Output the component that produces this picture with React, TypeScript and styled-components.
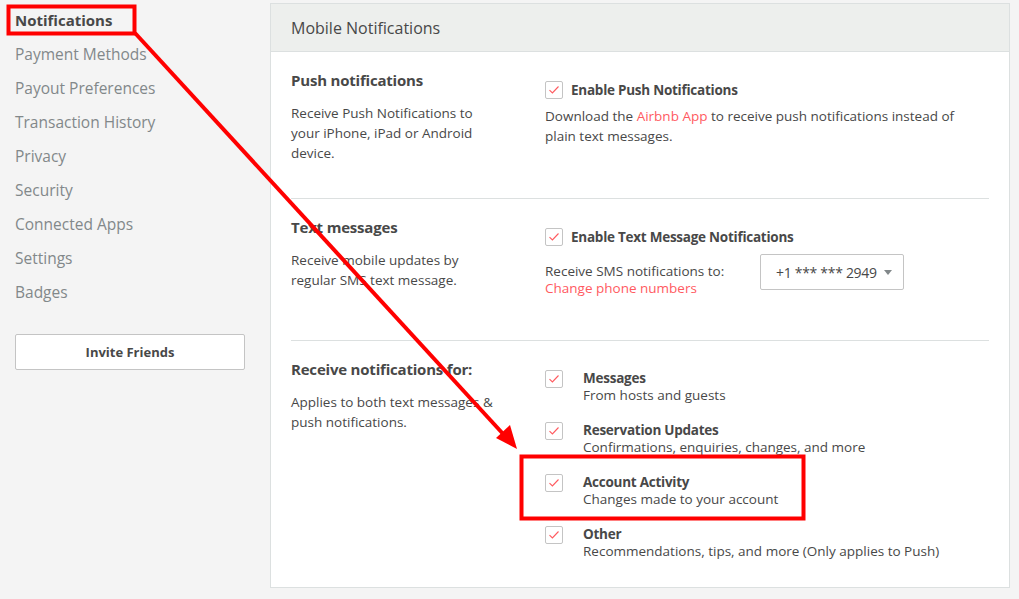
import React from 'react';
import styled, { createGlobalStyle } from 'styled-components';

const FONT = `"Open Sans", "Liberation Sans", sans-serif`;
const RED = '#ff5a5f';
const TEXT = '#484848';

const GlobalStyle = createGlobalStyle`
    html, body {
        margin: 0;
        padding: 0;
        background: #f4f4f4;
        font-family: ${FONT};
        color: ${TEXT};
    }
    * { box-sizing: border-box; }
`;

const Page = styled.div`
    position: relative;
    display: flex;
    align-items: flex-start;
    width: 1019px;
    height: 599px;
    padding-top: 3px;
    overflow: hidden;
`;

const Sidebar = styled.nav`
    width: 270px;
    padding-left: 15px;
    flex-shrink: 0;
`;

const NavItem = styled.div<{ $active?: boolean }>`
    height: 34px;
    line-height: 34px;
    font-size: ${({ $active }) => ($active ? '15px' : '15.5px')};
    font-weight: ${({ $active }) => ($active ? 700 : 400)};
    color: ${({ $active }) => ($active ? TEXT : '#82888a')};
`;

const InviteButton = styled.button`
    display: block;
    width: 230px;
    height: 36px;
    margin-top: 25px;
    background: #fff;
    border: 1px solid #c4c4c4;
    border-radius: 2px;
    font-family: ${FONT};
    font-size: 13px;
    font-weight: 700;
    color: ${TEXT};
`;

const Panel = styled.section`
    width: 740px;
    background: #fff;
    border: 1px solid #dce0e0;
`;

const PanelHeader = styled.header`
    height: 48px;
    padding: 0 20px;
    display: flex;
    align-items: center;
    background: #edefed;
    border-bottom: 1px solid #dce0e0;
    font-size: 16px;
`;

const Section = styled.div<{ $last?: boolean }>`
    display: grid;
    grid-template-columns: 254px 1fr;
    margin: 0 20px;
    padding: 17px 0 ${({ $last }) => ($last ? '27px' : '35px')};
    border-bottom: ${({ $last }) => ($last ? 'none' : '1px solid #dce0e0')};
`;

const Title = styled.h3`
    margin: 0;
    font-size: 15px;
    letter-spacing: -0.2px;
    line-height: 22px;
    font-weight: 700;
`;

const Desc = styled.p<{ $width: number }>`
    margin: 12px 0 0;
    width: ${({ $width }) => $width}px;
    font-size: 13.5px;
    line-height: 20px;
`;

const Right = styled.div`
    padding-top: 12px;
`;

const CheckRow = styled.label<{ $gap: number }>`
    display: flex;
    align-items: flex-start;
    gap: ${({ $gap }) => $gap}px;
`;

const Box = styled.span`
    width: 18px;
    height: 18px;
    flex-shrink: 0;
    border: 1px solid #c4c4c4;
    border-radius: 2px;
    display: flex;
    align-items: center;
    justify-content: center;
    background: #fff;
`;

const CheckLabel = styled.span`
    font-size: 13.5px;
    letter-spacing: -0.25px;
    line-height: 18px;
    font-weight: 700;
`;

const Help = styled.p`
    margin: 7px 0 0;
    max-width: 420px;
    font-size: 13.5px;
    line-height: 20px;
`;

const Link = styled.a`
    color: ${RED};
    text-decoration: none;
`;

const SmsRow = styled.div`
    display: flex;
    align-items: flex-start;
    margin-top: 8px;
    margin-bottom: 8px;
`;

const SmsText = styled.div`
    width: 215px;
    margin-top: 9px;
    font-size: 13.5px;
    line-height: 17px;
`;

const Select = styled.div`
    width: 144px;
    height: 36px;
    border: 1px solid #c4c4c4;
    border-radius: 2px;
    display: flex;
    align-items: center;
    justify-content: space-between;
    padding: 0 11px 0 15px;
    font-size: 14px;
    letter-spacing: -0.3px;
`;

const Caret = styled.span`
    width: 0;
    height: 0;
    border-left: 4px solid transparent;
    border-right: 4px solid transparent;
    border-top: 5px solid #82888a;
`;

const List = styled.div`
    display: flex;
    flex-direction: column;
    gap: 18px;
`;

const ItemText = styled.div`
    font-size: 13.5px;
    line-height: 17px;
`;

const ItemTitle = styled.div`
    font-weight: 700;
    letter-spacing: -0.25px;
`;

const Overlay = styled.svg`
    position: absolute;
    left: 0;
    top: 0;
    pointer-events: none;
`;

const Check = () => (
    <Box>
        <svg width="12" height="10" viewBox="0 0 12 10">
            <path d="M1.5 5.2 L4.4 8 L10.5 1.5" fill="none" stroke={RED} strokeWidth="1.1" />
        </svg>
    </Box>
);

const navItems = [
    'Notifications',
    'Payment Methods',
    'Payout Preferences',
    'Transaction History',
    'Privacy',
    'Security',
    'Connected Apps',
    'Settings',
    'Badges',
];

const notifyItems = [
    ['Messages', 'From hosts and guests'],
    ['Reservation Updates', 'Confirmations, enquiries, changes, and more'],
    ['Account Activity', 'Changes made to your account'],
    ['Other', 'Recommendations, tips, and more (Only applies to Push)'],
];

export default function App() {
    return (
        <Page>
            <GlobalStyle />
            <Sidebar>
                {navItems.map((n, i) => (
                    <NavItem key={n} $active={i === 0}>{n}</NavItem>
                ))}
                <InviteButton>Invite Friends</InviteButton>
            </Sidebar>
            <Panel>
                <PanelHeader>Mobile Notifications</PanelHeader>
                <Section>
                    <div>
                        <Title>Push notifications</Title>
                        <Desc $width={200}>Receive Push Notifications to your iPhone, iPad or Android device.</Desc>
                    </div>
                    <Right>
                        <CheckRow $gap={8}>
                            <Check />
                            <CheckLabel>Enable Push Notifications</CheckLabel>
                        </CheckRow>
                        <Help>
                            Download the <Link>Airbnb App</Link> to receive push notifications instead of plain text messages.
                        </Help>
                    </Right>
                </Section>
                <Section>
                    <div>
                        <Title>Text messages</Title>
                        <Desc $width={180}>Receive mobile updates by regular SMS text message.</Desc>
                    </div>
                    <Right>
                        <CheckRow $gap={8}>
                            <Check />
                            <CheckLabel>Enable Text Message Notifications</CheckLabel>
                        </CheckRow>
                        <SmsRow>
                            <SmsText>
                                Receive SMS notifications to:<br />
                                <Link>Change phone numbers</Link>
                            </SmsText>
                            <Select>
                                <span>+1 *** *** 2949</span>
                                <Caret />
                            </Select>
                        </SmsRow>
                    </Right>
                </Section>
                <Section $last>
                    <div>
                        <Title>Receive notifications for:</Title>
                        <Desc $width={215}>Applies to both text messages &amp; push notifications.</Desc>
                    </div>
                    <Right>
                        <List>
                            {notifyItems.map(([t, s]) => (
                                <CheckRow key={t} $gap={20}>
                                    <Check />
                                    <ItemText>
                                        <ItemTitle>{t}</ItemTitle>
                                        {s}
                                    </ItemText>
                                </CheckRow>
                            ))}
                        </List>
                    </Right>
                </Section>
            </Panel>
            <Overlay width="1019" height="599">
                <rect x="8.5" y="6.5" width="126" height="27" fill="none" stroke="#ff0000" strokeWidth="4" />
                <rect x="521.5" y="456.5" width="282" height="62" fill="none" stroke="#ff0000" strokeWidth="4" />
                <line x1="135" y1="33" x2="505" y2="436" stroke="#ff0000" strokeWidth="4" />
                <polygon points="517,449 496,438 510,425" fill="#ff0000" />
            </Overlay>
        </Page>
    );
}
